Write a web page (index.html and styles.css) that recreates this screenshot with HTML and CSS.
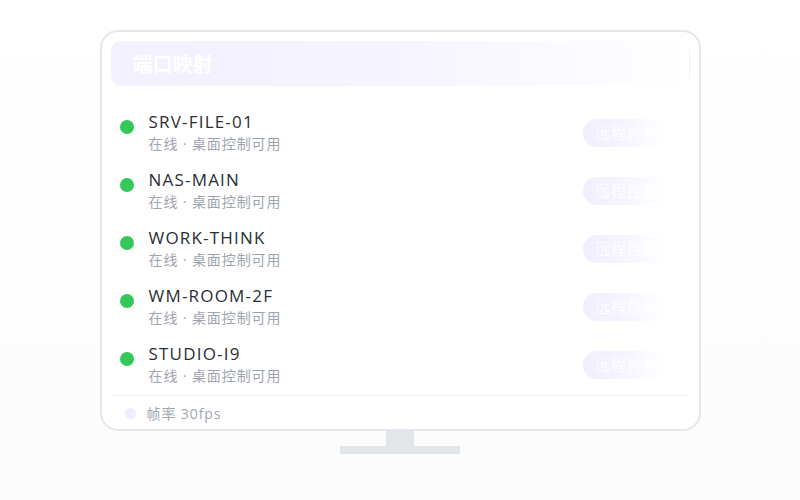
FILE: index.html
```html
<!DOCTYPE html>
<html lang="zh-CN">
<head>
<meta charset="utf-8">
<title>端口映射</title>
<link rel="stylesheet" href="styles.css">
</head>
<body>
<div class="stage">
  <div class="monitor">
    <div class="screen">
      <div class="header">
        <span class="title">端口映射</span>
        <span class="header-extra">5 台</span>
        <span class="hline"></span>
      </div>
      <div class="list">
        <div class="row">
          <span class="dot"></span>
          <div class="info">
            <div class="name">SRV-FILE-01</div>
            <div class="sub">在线 · 桌面控制可用</div>
          </div>
          <span class="btn">远程控制</span>
        </div>
        <div class="row">
          <span class="dot"></span>
          <div class="info">
            <div class="name">NAS-MAIN</div>
            <div class="sub">在线 · 桌面控制可用</div>
          </div>
          <span class="btn">远程控制</span>
        </div>
        <div class="row">
          <span class="dot"></span>
          <div class="info">
            <div class="name">WORK-THINK</div>
            <div class="sub">在线 · 桌面控制可用</div>
          </div>
          <span class="btn">远程控制</span>
        </div>
        <div class="row">
          <span class="dot"></span>
          <div class="info">
            <div class="name">WM-ROOM-2F</div>
            <div class="sub">在线 · 桌面控制可用</div>
          </div>
          <span class="btn">远程控制</span>
        </div>
        <div class="row">
          <span class="dot"></span>
          <div class="info">
            <div class="name">STUDIO-I9</div>
            <div class="sub">在线 · 桌面控制可用</div>
          </div>
          <span class="btn">远程控制</span>
        </div>
      </div>
      <div class="footer">
        <span class="fdot"></span>
        <span class="ftext">帧率 30fps</span>
      </div>
    </div>
    <div class="neck"></div>
    <div class="base"></div>
  </div>
</div>
</body>
</html>
```
FILE: styles.css
```css
html, body {
  margin: 0;
  padding: 0;
}
body {
  width: 800px;
  height: 500px;
  overflow: hidden;
  background: linear-gradient(180deg, #ffffff 0%, #fcfcfd 100%);
  font-family: "Open Sans", "Noto Sans CJK SC", sans-serif;
}
.stage {
  display: flex;
  justify-content: center;
  padding-top: 30px;
}
.monitor {
  display: flex;
  flex-direction: column;
  align-items: center;
}
.screen {
  box-sizing: border-box;
  width: 601px;
  height: 401px;
  border: 2px solid #e4e7eb;
  border-radius: 18px;
  background: #ffffff;
  padding: 9px 9px 0 9px;
  display: flex;
  flex-direction: column;
}
.header {
  height: 45px;
  border-radius: 10px;
  background: linear-gradient(90deg, #f3f0ff 0%, #f6f4ff 50%, rgba(250, 249, 255, 0.6) 85%, rgba(255, 255, 255, 0) 100%);
  display: flex;
  align-items: center;
  padding: 0 0 0 22px;
}
.title {
  color: #ffffff;
  font-family: "Noto Sans CJK SC", sans-serif;
  font-size: 20px;
  font-weight: 700;
  line-height: 26px;
  flex: 1;
}
.header-extra {
  color: rgba(255, 255, 255, 0.9);
  font-size: 14px;
  margin-right: 30px;
}
.hline {
  width: 1px;
  height: 30px;
  background: #f0f1f4;
}
.list {
  margin-top: 24px;
  display: flex;
  flex-direction: column;
  gap: 15px;
  padding-left: 9px;
}
.row {
  height: 43px;
  display: flex;
  align-items: center;
}
.dot {
  width: 14px;
  height: 14px;
  border-radius: 50%;
  background: #34c759;
  align-self: flex-start;
  margin-top: 10px;
  flex: none;
}
.info {
  margin-left: 15px;
  display: flex;
  flex-direction: column;
  flex: 1;
}
.name {
  font-size: 17px;
  line-height: 22px;
  font-weight: 400;
  color: #2a2e36;
  letter-spacing: 1.2px;
  margin-top: 1px;
}
.sub {
  font-size: 14px;
  line-height: 20px;
  margin-top: 1px;
  font-weight: 400;
  letter-spacing: 0.9px;
  color: #9ea4ae;
}
.btn {
  flex: none;
  width: 84px;
  height: 28px;
  margin-right: 23px;
  box-sizing: border-box;
  padding-left: 12px;
  border-radius: 14px;
  background: linear-gradient(90deg, #f1eeff 0%, #f5f3ff 45%, rgba(255, 255, 255, 0) 95%);
  color: #ffffff;
  font-family: "Noto Serif CJK SC", serif;
  font-size: 16px;
  line-height: 28px;
  white-space: nowrap;
  overflow: hidden;
  margin-top: 2px;
}
.footer {
  margin-top: 10px;
  border-top: 1px solid #eef0f3;
  margin-left: 1px;
  margin-right: 1px;
  display: flex;
  align-items: center;
  box-sizing: border-box;
  height: 33px;
  padding: 3px 0 0 13px;
}
.fdot {
  width: 11px;
  height: 11px;
  border-radius: 50%;
  background: #efecfe;
  flex: none;
}
.ftext {
  margin-left: 11px;
  font-size: 14px;
  font-weight: 400;
  letter-spacing: 0.9px;
  color: #a0a6b0;
  line-height: 20px;
}
.neck {
  width: 28px;
  height: 15px;
  background: #e2e6ea;
}
.base {
  width: 120px;
  height: 8px;
  background: #e2e6ea;
}
```
